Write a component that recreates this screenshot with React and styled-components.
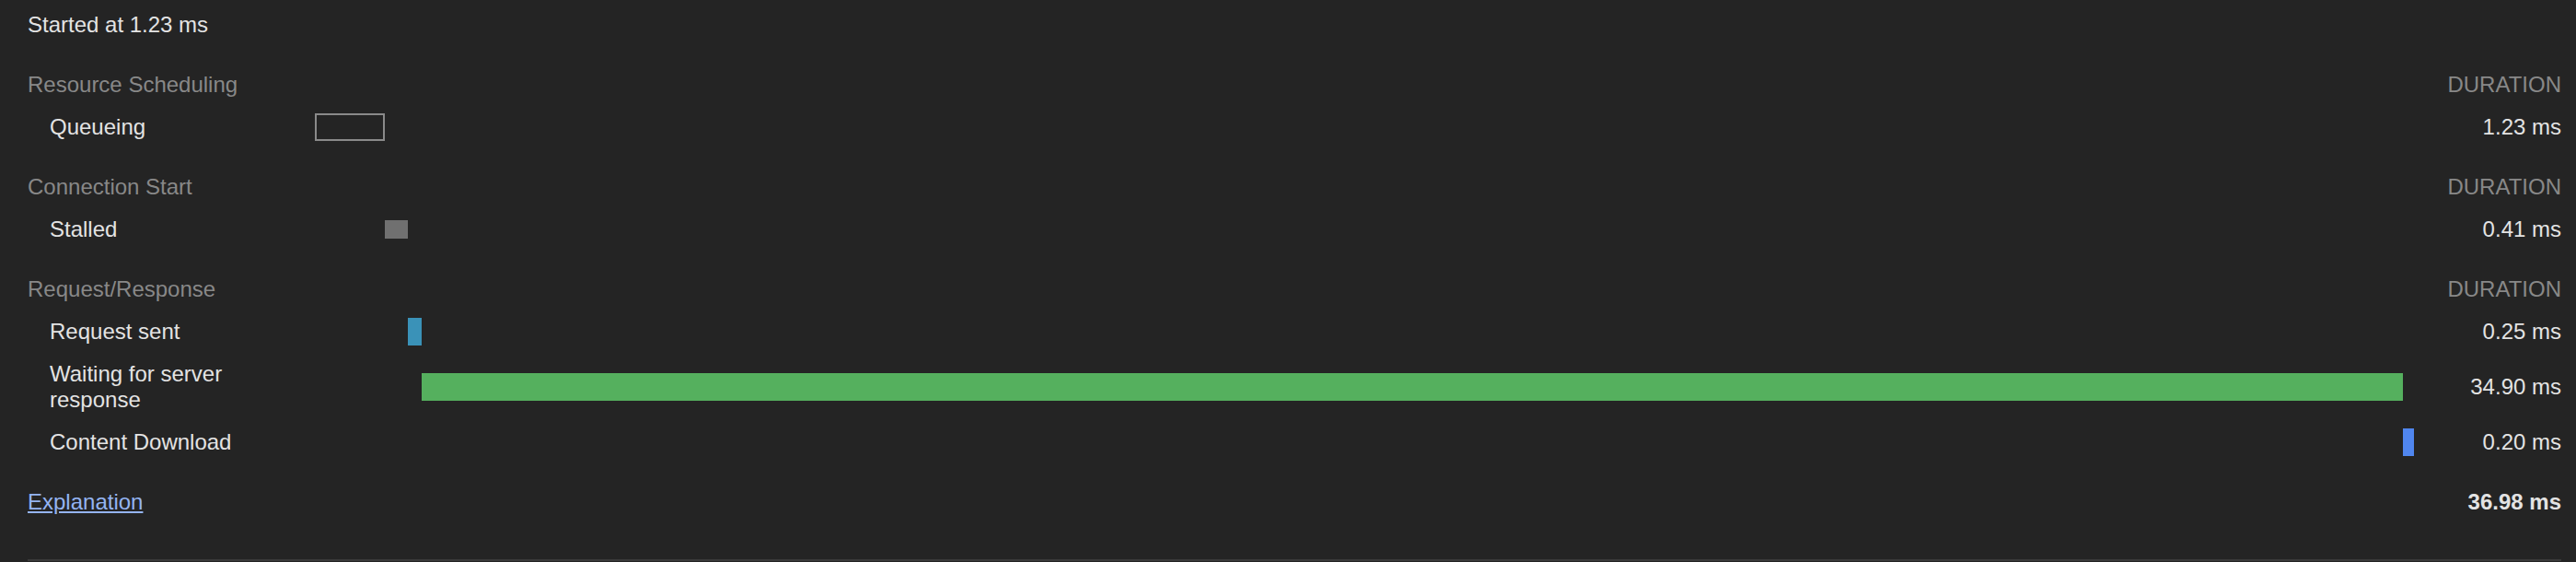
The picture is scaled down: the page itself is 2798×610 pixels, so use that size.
import styled, { createGlobalStyle } from "styled-components";

const GlobalStyle = createGlobalStyle`
  html, body {
    margin: 0;
    padding: 0;
    background: #242424;
  }
  body {
    font-family: "Liberation Sans", Arial, sans-serif;
    font-size: 24px;
    line-height: 28px;
    color: #e3e3e3;
  }
`;

const Panel = styled.div`
  margin: 0 16px 0 30px;
  padding: 4px 0 39px;
  border-bottom: 2px solid #3a3a3a;
`;

const Row = styled.div`
  display: grid;
  grid-template-columns: 312px 1fr 160px;
  align-items: center;
  min-height: 46px;
  margin-top: ${(p) => (p.$gap ? "19px" : "0")};
`;

const Label = styled.div`
  padding: 9px 40px 9px ${(p) => (p.$indent ? "24px" : "0")};
  color: ${(p) => (p.$muted ? "#888888" : "#e3e3e3")};
`;

const Track = styled.div`
  display: flex;
  align-items: center;
  height: 30px;
`;

const Bar = styled.div`
  box-sizing: border-box;
  flex: none;
  height: ${(p) => p.$height || 30}px;
  background: ${(p) => (p.$outline ? "transparent" : p.$color)};
  border: ${(p) => (p.$outline ? `2px solid ${p.$color}` : "none")};
`;

const Duration = styled.div`
  text-align: right;
  white-space: nowrap;
  color: ${(p) => (p.$muted ? "#888888" : "#e3e3e3")};
  font-weight: ${(p) => (p.$bold ? 700 : 400)};
`;

const Link = styled.a`
  color: #94b4f2;
  text-decoration: underline;
  text-underline-offset: 2px;
  cursor: pointer;
`;

const total = 36.99;

const sections = [
  {
    title: "Resource Scheduling",
    rows: [{ label: "Queueing", start: 0, ms: 1.23, color: "#8a8a8a", outline: true }],
  },
  {
    title: "Connection Start",
    rows: [{ label: "Stalled", start: 1.23, ms: 0.41, color: "#707070", height: 20 }],
  },
  {
    title: "Request/Response",
    rows: [
      { label: "Request sent", start: 1.64, ms: 0.25, color: "#3a92b8" },
      { label: "Waiting for server response", start: 1.89, ms: 34.9, color: "#55b05e" },
      { label: "Content Download", start: 36.79, ms: 0.2, color: "#5086ef" },
    ],
  },
];

const TimingRow = ({ row }) => (
  <Row>
    <Label $indent>{row.label}</Label>
    <Track>
      <Bar
        $color={row.color}
        $outline={row.outline}
        $height={row.height}
        style={{
          marginLeft: `${(row.start / total) * 100}%`,
          width: `${(row.ms / total) * 100}%`,
        }}
      />
    </Track>
    <Duration>{row.ms.toFixed(2)} ms</Duration>
  </Row>
);

export default function App() {
  return (
    <>
      <GlobalStyle />
      <Panel>
        <Row>
          <Label>Started at 1.23 ms</Label>
        </Row>
        {sections.map((s) => (
          <div key={s.title}>
            <Row $gap>
              <Label $muted>{s.title}</Label>
              <div />
              <Duration $muted>DURATION</Duration>
            </Row>
            {s.rows.map((r) => (
              <TimingRow key={r.label} row={r} />
            ))}
          </div>
        ))}
        <Row $gap>
          <Label>
            <Link>Explanation</Link>
          </Label>
          <div />
          <Duration $bold>36.98 ms</Duration>
        </Row>
      </Panel>
    </>
  );
}
